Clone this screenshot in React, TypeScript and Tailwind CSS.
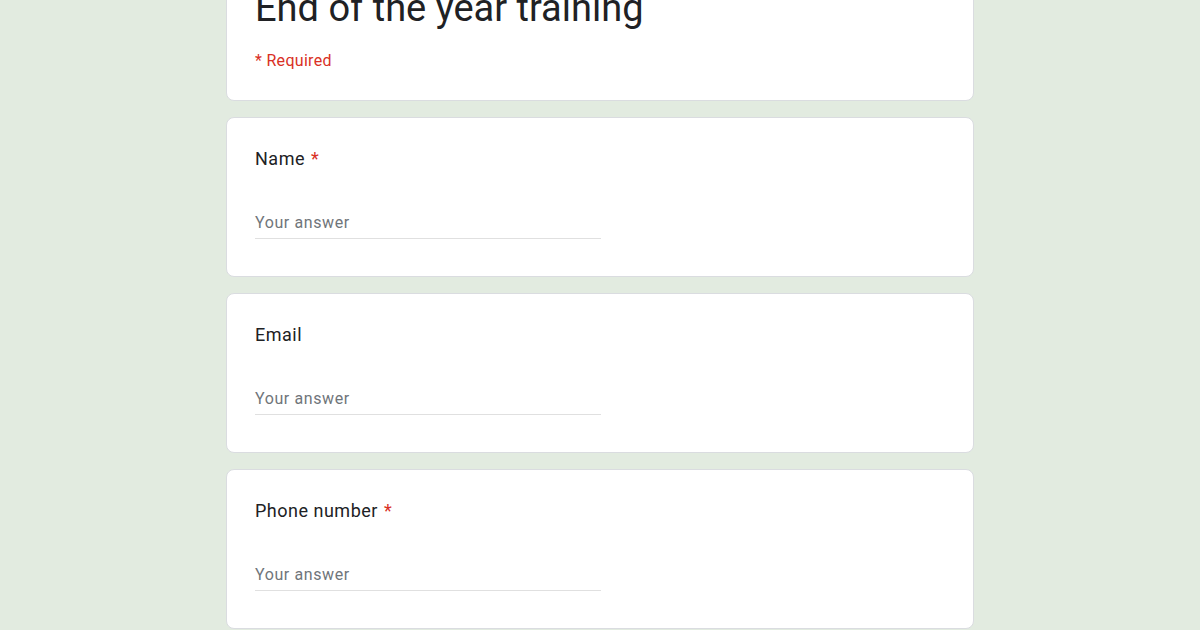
const FONT = "font-['Roboto','Liberation_Sans',sans-serif]";

type Question = {
  label: string;
  required: boolean;
};

const QUESTIONS: Question[] = [
  { label: "Name", required: true },
  { label: "Email", required: false },
  { label: "Phone number", required: true },
];

function QuestionCard({ question }: { question: Question }) {
  return (
    <div className="h-[160px] rounded-[8px] border border-[#dadce0] bg-white px-[28px] pt-[29px]">
      <div className="text-[18px] leading-[24px] tracking-[0.5px] text-[#202124]">
        {question.label}
        {question.required && <span className="ml-[6px] text-[#d93025]">*</span>}
      </div>
      <div className="mt-[42px] w-[346px] border-b border-[#e0e0e0] pb-[5px] text-[16px] leading-[20px] tracking-[0.6px] text-[#70757a]">
        Your answer
      </div>
    </div>
  );
}

export default function App() {
  return (
    <div className={`${FONT} h-[630px] overflow-hidden bg-[#e2ebe0]`}>
      <div className="mx-auto flex w-[748px] flex-col gap-[16px] -mt-[18px]">
        <div className="rounded-[8px] border border-[#dadce0] bg-white px-[28px] pt-[3px] pb-[29px]">
          <h1 className="text-[38px] leading-[44px] text-[#202124]">End of the year training</h1>
          <div className="mt-[21px] text-[16px] leading-[20px] tracking-[0.3px] text-[#d93025]">* Required</div>
        </div>
        {QUESTIONS.map((question) => (
          <QuestionCard key={question.label} question={question} />
        ))}
      </div>
    </div>
  );
}
